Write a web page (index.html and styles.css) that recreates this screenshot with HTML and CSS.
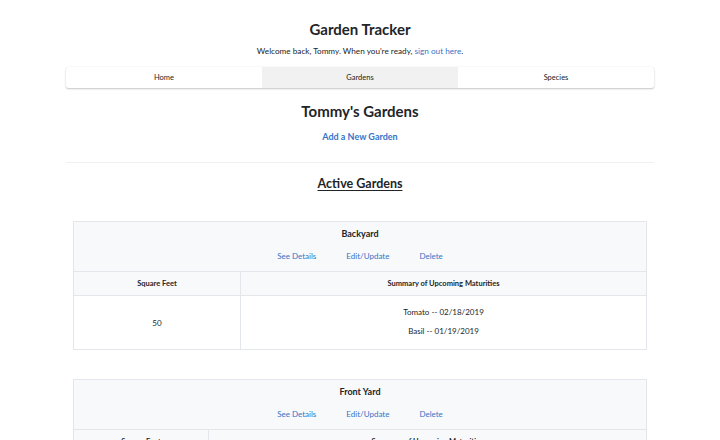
FILE: index.html
```html
<!DOCTYPE html>
<html lang="en">
<head>
<meta charset="utf-8">
<title>Garden Tracker</title>
<link rel="stylesheet" href="styles.css">
</head>
<body>
<div class="page">
  <h1 class="title">Garden Tracker</h1>
  <p class="welcome">Welcome back, Tommy. When you're ready, <a href="#">sign out here</a>.</p>
  <nav class="tabs">
    <a class="tab" href="#">Home</a>
    <a class="tab active" href="#">Gardens</a>
    <a class="tab" href="#">Species</a>
  </nav>
  <h2 class="user-title">Tommy's Gardens</h2>
  <p class="add"><a href="#">Add a New Garden</a></p>
  <hr class="rule">
  <h3 class="section-title">Active Gardens</h3>

  <section class="card">
    <div class="card-head">
      <div class="card-name">Backyard</div>
      <div class="card-links"><a href="#">See Details</a><a href="#">Edit/Update</a><a href="#">Delete</a></div>
    </div>
    <div class="grid cols-a">
      <div class="th">Square Feet</div>
      <div class="th">Summary of Upcoming Maturities</div>
      <div class="td num">50</div>
      <div class="td list"><p>Tomato -- 02/18/2019</p><p>Basil -- 01/19/2019</p></div>
    </div>
  </section>

  <section class="card">
    <div class="card-head">
      <div class="card-name">Front Yard</div>
      <div class="card-links"><a href="#">See Details</a><a href="#">Edit/Update</a><a href="#">Delete</a></div>
    </div>
    <div class="grid cols-b">
      <div class="th">Square Feet</div>
      <div class="th">Summary of Upcoming Maturities</div>
      <div class="td num">120</div>
      <div class="td list"><p>Carrot -- 03/02/2019</p><p>Lettuce -- 02/11/2019</p></div>
    </div>
  </section>
</div>
</body>
</html>
```

FILE: styles.css
```css
* { box-sizing: border-box; }
html, body { margin: 0; padding: 0; background: #fff; }
body {
  font-family: Lato, "Open Sans", "Liberation Sans", sans-serif;
  font-size: 8px;
  color: #212529;
}
a { color: #3574c8; text-decoration: none; }
.page { width: 588px; margin: 0 auto; text-align: center; }
.title {
  font-size: 15px; font-weight: 700; line-height: 20px;
  margin: 0; padding-top: 19px;
}
.welcome { margin: 0; padding-top: 6px; line-height: 12px; font-size: 8.2px; }
.tabs {
  display: grid; grid-template-columns: 1fr 1fr 1fr;
  margin-top: 10px; height: 21px;
  background: #fff; border-radius: 2px;
  box-shadow: 0 1px 2px rgba(0,0,0,0.22), 0 0 1px rgba(0,0,0,0.12);
}
.tab { color: #222; font-size: 7.5px; line-height: 21px; }
.tab.active { background: #f1f1f1; }
.user-title {
  font-size: 15px; font-weight: 700; line-height: 18px;
  margin: 0; padding-top: 14px;
}
.add { margin: 0; padding-top: 11px; line-height: 12px; font-size: 9px; font-weight: 700; }
.rule { border: 0; border-top: 1px solid #f0f0f0; margin: 19px 0 0; height: 0; }
.section-title {
  font-size: 12.5px; font-weight: 700; line-height: 16px;
  margin: 0; padding-top: 13px;
  text-decoration: underline; text-decoration-thickness: 1px; text-underline-offset: 2px;
}
.card {
  margin: 29px 7px 0;
  border: 1px solid #e3e6ea;
  background: #fff;
}
.card + .card { margin-top: 29px; }
.card-head {
  background: #f8f9fa;
  padding: 6px 0 9px;
  border-bottom: 1px solid #e3e6ea;
}
.card-name { font-weight: 700; font-size: 9px; line-height: 12px; }
.card-links { margin-top: 10px; line-height: 12px; font-size: 8px; display: flex; justify-content: center; gap: 30px; }
.grid { display: grid; }
.cols-a { grid-template-columns: 167px 1fr; }
.cols-b { grid-template-columns: 135px 1fr; }
.th {
  background: #f8f9fa; font-weight: 700; font-size: 7.5px;
  line-height: 23px; border-bottom: 1px solid #e3e6ea;
}
.th:first-child, .td.num { border-right: 1px solid #e3e6ea; }
.td { font-size: 8px; }
.td.num { display: flex; align-items: center; justify-content: center; }
.td.list { padding: 10px 0 12px; }
.td.list p { margin: 0; line-height: 12px; }
.td.list p + p { margin-top: 7px; }
```
